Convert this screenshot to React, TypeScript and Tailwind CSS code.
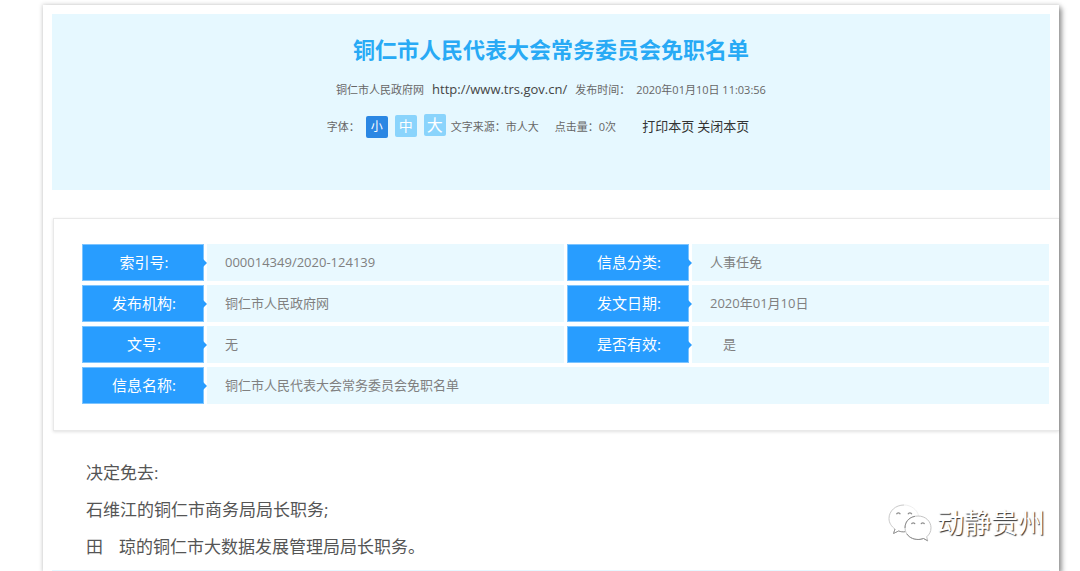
import type { ReactNode } from "react";

const sizes = [
  { label: "小", style: "bg-[#2b87e3] text-xs" },
  { label: "中", style: "bg-[#8ad4fc] text-sm" },
  { label: "大", style: "bg-[#8ad4fc] text-base" },
];

function Label({ children }: { children: ReactNode }) {
  return (
    <th
      scope="row"
      className="relative h-[37px] w-[122px] border border-[#7cc4ff] bg-[#289dff] p-0 pl-[2px] text-center text-[15px] font-normal text-white"
    >
      {children}
      <svg
        className="absolute top-1/2 left-full h-2 w-1 -translate-y-1/2"
        viewBox="0 0 4 8"
        aria-hidden="true"
      >
        <path d="M0 0L4 4L0 8Z" fill="#289dff" />
      </svg>
    </th>
  );
}

function Value({ children, span, indent }: { children: ReactNode; span?: number; indent?: boolean }) {
  return (
    <td
      colSpan={span}
      className={`bg-[#e9f9ff] py-0 pr-4 text-[13px] text-[#808080] ${indent ? "pl-[31px]" : "pl-[18px]"}`}
    >
      {children}
    </td>
  );
}

function Watermark() {
  return (
    <div className="absolute right-[14px] bottom-[29px] flex items-center gap-[5px]">
      <svg className="h-[38px] w-11" viewBox="0 0 44 38" fill="none" aria-hidden="true">
        <path
          d="M16 1C7.500 1 1 7 1 14.500C1 19 3.500 22.500 7 25L5.500 29.500L10.500 27C12.500 27.700 15 28 17 27.700"
          stroke="#c9c9c9"
          strokeWidth="1"
        />
        <path d="M7 25L5.500 29.500L10.500 27C12.500 27.700 15 28 17 27.700" stroke="#9a9a9a" strokeWidth="1" />
        <path d="M16 1C23 1 29 5.500 30.500 11.500" stroke="#efefef" strokeWidth="1" />
        <path
          d="M30 12C22.500 12 17 17.300 17 23.800C17 30.500 22.500 35.500 30 35.500C32 35.500 34 35.200 35.500 34.500L39.700 36.800L38.700 32.800C41.500 30.500 43 27.500 43 23.800C43 17.300 37.500 12 30 12Z"
          fill="#ffffff"
          stroke="#c4c4c4"
          strokeWidth="1"
        />
        <path d="M17 24C17 18 20.500 13.500 27 12.300M19 30C21.500 34 27 36 32 35.400L35.500 34.500L39.700 36.800" stroke="#8f8f8f" strokeWidth="1" />
        <path
          d="M8.500 10.200A2 2 0 0 1 12.300 10.200M20 10.200A2 2 0 0 1 23.800 10.200M23.500 20.200A1.800 1.800 0 0 1 27 20.200M33 20.200A1.800 1.800 0 0 1 36.500 20.200"
          stroke="#8c8c8c"
          strokeWidth="1.200"
        />
      </svg>
      <span className="text-[27px] leading-9 text-white [text-shadow:1px_1px_1px_#333]">动静贵州</span>
    </div>
  );
}

export default function App() {
  return (
    <div className="overflow-hidden bg-white pt-[5px] pr-[21px] pl-[43px] font-['Open_Sans','Noto_Sans_CJK_SC',sans-serif]">
      <main className="relative bg-white pt-[9px] shadow-[0_0_4px_1px_rgba(0,0,0,0.14),3px_3px_5px_rgba(0,0,0,0.36)]">
        <header className="mx-[9px] h-44 bg-[#e6f8ff] pt-[19px] text-[11px] text-[#666]">
          <h1 className="text-center text-[22px] leading-8 font-bold text-[#28aaf5]">
            铜仁市人民代表大会常务委员会免职名单
          </h1>
          <div className="mt-[14px] flex items-baseline justify-center leading-5">
            <span>铜仁市人民政府网</span>
            <a href="http://www.trs.gov.cn/" className="mx-2 text-[13px] leading-5 text-[#444]">
              http://www.trs.gov.cn/
            </a>
            <span>发布时间：</span>
            <time className="ml-[6px]">2020年01月10日 11:03:56</time>
          </div>
          <div className="mt-[14px] flex items-baseline justify-center pr-[26px] leading-[21px]">
            <span>字体：</span>
            <div className="mr-[5px] ml-[6px] flex items-baseline gap-[7px]">
              {sizes.map((s) => (
                <button
                  key={s.label}
                  type="button"
                  className={`h-[22px] w-[22px] rounded-xs p-0 text-center leading-[22px] text-white ${s.style}`}
                >
                  {s.label}
                </button>
              ))}
            </div>
            <span>文字来源：市人大</span>
            <span className="ml-4">点击量：0次</span>
            <div className="ml-[26px] flex gap-[3px] text-[13px] text-[#333]">
              <button type="button">打印本页</button>
              <button type="button">关闭本页</button>
            </div>
          </div>
        </header>

        <section className="mt-7 ml-[10px] border-y border-l border-[#e9e9e9] pt-[21px] pr-[7px] pb-[22px] pl-[25px] shadow-[0_1px_3px_rgba(0,0,0,0.12)]">
          <table className="w-full table-fixed border-separate border-spacing-x-[3px] border-spacing-y-1">
            <colgroup>
              <col className="w-[122px]" />
              <col />
              <col className="w-[122px]" />
              <col />
            </colgroup>
            <tbody>
              <tr>
                <Label>索引号:</Label>
                <Value>000014349/2020-124139</Value>
                <Label>信息分类:</Label>
                <Value>人事任免</Value>
              </tr>
              <tr>
                <Label>发布机构:</Label>
                <Value>铜仁市人民政府网</Value>
                <Label>发文日期:</Label>
                <Value>2020年01月10日</Value>
              </tr>
              <tr>
                <Label>文号:</Label>
                <Value>无</Value>
                <Label>是否有效:</Label>
                <Value indent>是</Value>
              </tr>
              <tr>
                <Label>信息名称:</Label>
                <Value span={3}>铜仁市人民代表大会常务委员会免职名单</Value>
              </tr>
            </tbody>
          </table>
        </section>

        <article className="mt-[23px] pb-[5px] pl-[43px] text-[17px] leading-[37px] text-[#555]">
          <p>决定免去:</p>
          <p>石维江的铜仁市商务局局长职务;</p>
          <p>
            <span className="mr-4">田</span>琼的铜仁市大数据发展管理局局长职务。
          </p>
        </article>
        <div className="mx-[9px] h-px bg-[#e6f8ff]" />
        <Watermark />
      </main>
    </div>
  );
}
